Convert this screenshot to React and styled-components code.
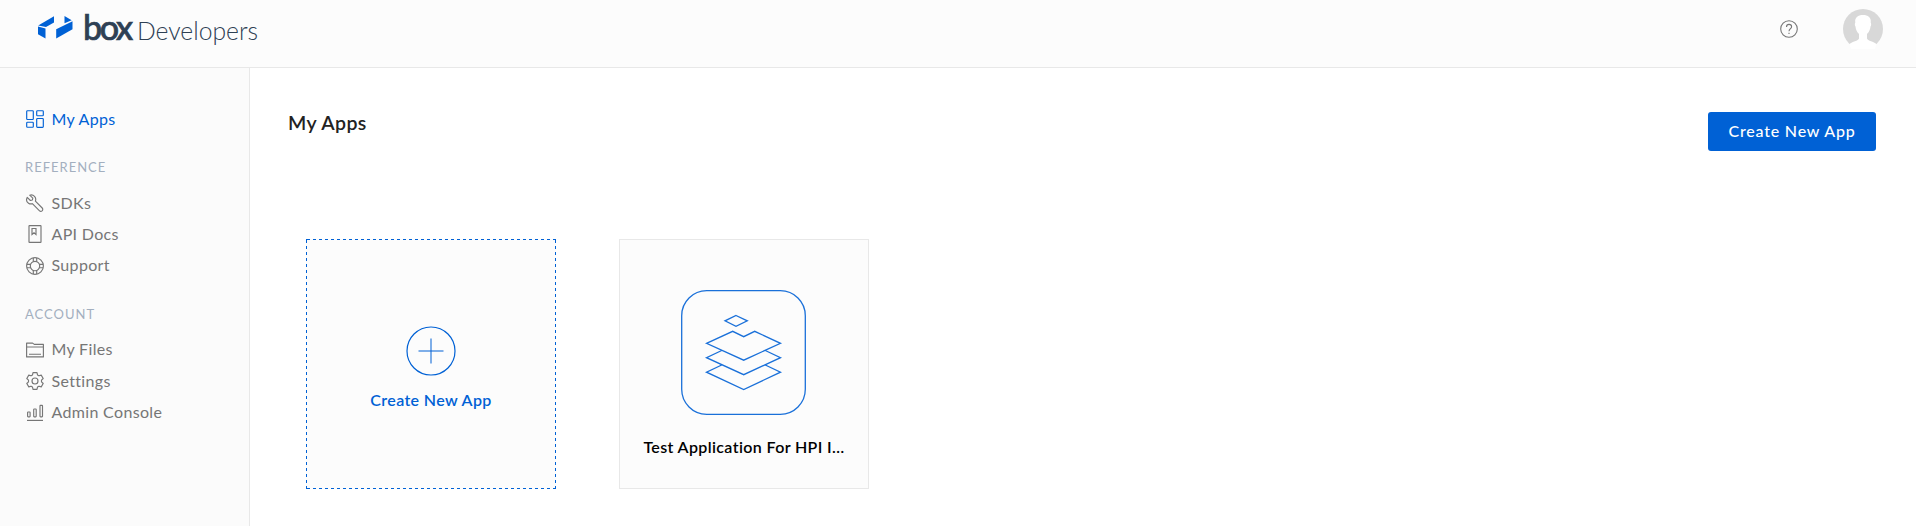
import React from "react";
import styled, { createGlobalStyle } from "styled-components";

const GlobalStyle = createGlobalStyle`
  * { box-sizing: border-box; }
  body {
    margin: 0;
    background: #fff;
    color: #222;
    font-family: Lato, "Liberation Sans", sans-serif;
    overflow: hidden;
  }
`;

const Page = styled.div`
  display: flex;
  flex-direction: column;
  height: 100vh;
`;

const Header = styled.header`
  display: flex;
  justify-content: space-between;
  height: 68px;
  flex: none;
  padding: 0 33px 0 37px;
  background: #fcfcfc;
  border-bottom: 1px solid #e8e8e8;
`;

const Brand = styled.a`
  display: flex;
  align-items: flex-start;
  color: #2e4054;
`;

const BrandMark = styled.svg`
  width: 36px;
  height: 24px;
  margin: 16px 10px 0 0;
`;

const BrandText = styled.div`
  display: flex;
  align-items: baseline;
`;

const BrandName = styled.span`
  width: 46px;
  font-size: 34px;
  line-height: 54px;
  font-weight: 500;
  letter-spacing: -2.4px;
  white-space: nowrap;
  -webkit-text-stroke: 0.7px #2e4054;
`;

const BrandProduct = styled.span`
  margin-left: 8px;
  font-size: 24.7px;
  font-weight: 300;
`;

const HeaderTools = styled.div`
  display: flex;
  align-items: flex-start;
  gap: 45px;
`;

const HelpIcon = styled.svg`
  width: 18px;
  height: 18px;
  margin-top: 20px;
`;

const Avatar = styled.svg`
  width: 40px;
  height: 40px;
  margin-top: 9px;
`;

const Body = styled.div`
  display: flex;
  flex: 1;
  min-height: 0;
`;

const Sidebar = styled.nav`
  width: 250px;
  flex: none;
  padding: 35.4px 0 0 25px;
  background: #fbfbfb;
  border-right: 1px solid #e8e8e8;
`;

const NavItem = styled.a`
  display: flex;
  align-items: center;
  gap: 6.5px;
  height: 31.3px;
  color: ${(p) => (p.$active ? "#0061d5" : "#767676")};
  font-size: 16px;
  letter-spacing: 0.33px;

  svg {
    width: 20px;
    height: 20px;
    flex: none;
    fill: none;
    stroke: currentColor;
    stroke-width: 1.15;
  }
`;

const NavLabel = styled.span`
  padding-bottom: 1.9px;
`;

const NavHeading = styled.h2`
  margin: 22.4px 0 10.4px;
  height: 20px;
  line-height: 20px;
  color: #a3afbf;
  font-size: 13px;
  font-weight: 400;
  letter-spacing: 1px;
`;

const Main = styled.main`
  flex: 1;
  padding: 44px 40px 0 38px;
`;

const TitleBar = styled.div`
  display: flex;
  justify-content: space-between;
  align-items: flex-start;
  height: 127px;
`;

const Title = styled.h1`
  margin: 0;
  line-height: 22px;
  font-size: 19.5px;
  font-weight: 600;
  letter-spacing: 0.42px;
`;

const PrimaryButton = styled.button`
  width: 168px;
  height: 39px;
  padding: 0 0 2px;
  border: 0;
  border-radius: 3px;
  background: #0061d5;
  color: #fff;
  font: 500 16px/37px Lato, sans-serif;
  letter-spacing: 0.8px;
`;

const CardGrid = styled.div`
  display: flex;
  gap: 63px;
  padding-left: 18px;
`;

const dash = (angle) =>
  `repeating-linear-gradient(${angle}, #0061d5 0 3px, transparent 3px 6px)`;

const corner = "linear-gradient(#0061d5, #0061d5)";

const Card = styled.article`
  display: flex;
  flex-direction: column;
  align-items: center;
  width: 250px;
  height: 250px;
  padding-top: 50px;
  background: #fcfcfc;
  border: 1px solid #e8e8e8;

  svg {
    flex: none;
    fill: none;
    stroke: #0061d5;
  }
`;

const NewAppCard = styled(Card)`
  padding-top: 87px;
  border: 0;
  background:
    ${corner} 0 0 / 1px 1px no-repeat,
    ${corner} 100% 0 / 1px 1px no-repeat,
    ${corner} 0 100% / 1px 1px no-repeat,
    ${corner} 100% 100% / 1px 1px no-repeat,
    ${dash("90deg")} 1px 0 / 100% 1px no-repeat,
    ${dash("90deg")} 1px 100% / 100% 1px no-repeat,
    ${dash("180deg")} 0 1px / 1px 100% no-repeat,
    ${dash("180deg")} 100% 1px / 1px 100% no-repeat,
    #fcfcfc;
`;

const AppIcon = styled.svg`
  width: 125px;
  height: 125px;
  margin-right: 2px;
  stroke-width: 1.3;
  stroke-opacity: 0.9;
`;

const CardTitle = styled.div`
  margin-top: ${(p) => p.$top}px;
  color: ${(p) => p.$color};
  font-size: 16px;
  font-weight: 600;
  line-height: 24px;
  letter-spacing: 0.37px;
  text-align: center;
  white-space: nowrap;
`;

const AppsIcon = () => (
  <svg viewBox="0 0 20 20">
    <rect x="1.7" y="1.7" width="6.6" height="8.8" rx=".8" />
    <rect x="11.7" y="1.7" width="6.6" height="5" rx=".8" />
    <rect x="1.7" y="13.2" width="6.6" height="5" rx=".8" />
    <rect x="11.7" y="9.5" width="6.6" height="8.8" rx=".8" />
  </svg>
);

const WrenchIcon = () => (
  <svg viewBox="0 0 20 20" strokeLinejoin="round">
    <path d="M4.7 2.2 7.8 5.2 7.4 7 5.4 7.5 2.2 4.4C1 6.8 1.7 9 3.5 10.2c1.2.8 2.6.9 3.9.5l6.9 6.9c.8.8 2 .9 2.8.3.8-.7.9-2 .1-2.9l-6.8-6.8c.6-1.7.3-3.6-.9-4.9C8.2 2 6.5 1.6 4.7 2.2Z" />
  </svg>
);

const DocsIcon = () => (
  <svg viewBox="0 0 20 20">
    <rect x="4" y="1.6" width="12" height="16.8" rx=".5" />
    <path d="M7 4.5h4v6L9 8.8 7 10.5Z" />
  </svg>
);

const SupportIcon = () => (
  <svg viewBox="0 0 20 20">
    <circle cx="10" cy="10" r="8.4" />
    <circle cx="10" cy="10" r="4.7" />
    <path d="M8.3 1.8v3.9M11.7 1.8v3.9M8.3 14.3v3.9M11.7 14.3v3.9M1.8 8.3h3.9M1.8 11.7h3.9M14.3 8.3h3.9M14.3 11.7h3.9" />
  </svg>
);

const FolderIcon = () => (
  <svg viewBox="0 0 20 20" strokeLinejoin="round">
    <path d="M1.6 16.9V3.1h6l1.7 1.3h9.1v12.5ZM1.6 7h16.8M4 14.2h12" />
  </svg>
);

const GearIcon = () => (
  <svg viewBox="0 0 20 20" strokeLinejoin="round">
    <circle cx="10" cy="10" r="3" />
    <path d="M8 1.6h4l.5 2.3 1.5.9 2.2-.7 2 3.4-1.7 1.6v1.8l1.7 1.6-2 3.4-2.2-.7-1.500.9-.5 2.300H8l-.5-2.300-1.500-.9-2.200.7-2-3.400 1.700-1.600V9.100L1.800 7.500l2-3.400 2.200.7 1.500-.9Z" />
  </svg>
);

const ChartIcon = () => (
  <svg viewBox="0 0 20 20">
    <path d="M2 18.4h16" />
    <rect x="2.6" y="10" width="2.5" height="4.8" rx=".5" />
    <rect x="8.7" y="7" width="2.5" height="7.8" rx=".5" />
    <rect x="15" y="3.4" width="2.5" height="11.4" rx=".5" />
  </svg>
);

const groups = [
  {
    heading: "REFERENCE",
    items: [
      ["SDKs", WrenchIcon],
      ["API Docs", DocsIcon],
      ["Support", SupportIcon],
    ],
  },
  {
    heading: "ACCOUNT",
    items: [
      ["My Files", FolderIcon],
      ["Settings", GearIcon],
      ["Admin Console", ChartIcon],
    ],
  },
];

export default function App() {
  return (
    <Page>
      <GlobalStyle />
      <Header>
        <Brand>
          <BrandMark viewBox="0 0 36 24" fill="#0061d5">
            <path d="M1.2 9.4 17 0.2v6.3L9 11 1.2 9.4Z" />
            <path d="M1 10.500 8.500 12.400V22.500L1 18.300Z" />
            <path d="M27.500 0 34.700 4.300 27.500 7.300Z" />
            <path d="M19.200 13.200 35.500 5.200V13.300L19.200 22.500Z" />
          </BrandMark>
          <BrandText>
            <BrandName>box</BrandName>
            <BrandProduct>Developers</BrandProduct>
          </BrandText>
        </Brand>
        <HeaderTools>
          <HelpIcon viewBox="0 0 18 18" fill="none" stroke="#767676" strokeWidth="1.1">
            <circle cx="9" cy="9" r="8.3" />
            <path d="M6.5 7.1C6.5 5.3 7.5 4.4 9 4.4s2.6.9 2.6 2.3C11.6 8.6 9 8.8 9 11.3M9 12.7v1.4" />
          </HelpIcon>
          <Avatar viewBox="0 0 40 40">
            <circle cx="20" cy="20" r="20" fill="#d8d8d8" />
            <path
              d="M6.5 35C9 32.5 15.5 32 16 29.5V25C13.5 22.5 12.8 20 12.5 17.5 11.5 16 11.8 14.5 12.3 13.5 11.5 8.5 15 6 20 6s8.5 2.5 7.7 7.5c.5 1 .8 2.5-.2 4-.3 2.5-1 5-3.5 7.5v4.5c.5 2.5 7 3 9.500 5.500L32 40H8Z"
              fill="#fff"
            />
          </Avatar>
        </HeaderTools>
      </Header>
      <Body>
        <Sidebar>
          <NavItem $active>
            <AppsIcon />
            <NavLabel>My Apps</NavLabel>
          </NavItem>
          {groups.map((group) => (
            <React.Fragment key={group.heading}>
              <NavHeading>{group.heading}</NavHeading>
              {group.items.map(([label, Icon]) => (
                <NavItem key={label}>
                  <Icon />
                  <NavLabel>{label}</NavLabel>
                </NavItem>
              ))}
            </React.Fragment>
          ))}
        </Sidebar>
        <Main>
          <TitleBar>
            <Title>My Apps</Title>
            <PrimaryButton>Create New App</PrimaryButton>
          </TitleBar>
          <CardGrid>
            <NewAppCard>
              <svg width="50" height="50" viewBox="0 0 50 50">
                <circle cx="25" cy="25" r="24" strokeWidth="1.2" />
                <path d="M25 12.5v25M12.5 25h25" />
              </svg>
              <CardTitle $top={12} $color="#0061d5">Create New App</CardTitle>
            </NewAppCard>
            <Card>
              <AppIcon viewBox="0 0 125 125">
                <rect x=".7" y=".7" width="123.6" height="123.6" rx="25" />
                <path d="M55 25.5 66.3 30.8 55 36.3 44 30.8Z" />
                <path d="M25.5 53.3 51.7 41.3 62.7 46.7 73.7 41.3 99.5 53.3 62.7 70.2Z" />
                <path d="M40.7 60.5 25.5 67.7 62.7 84.7 99.5 67.7 84.3 60.5" />
                <path d="M40.7 75 25.5 82.2 62.7 99.5 99.5 82.2 84.3 75" />
              </AppIcon>
              <CardTitle $top={20} $color="#000">Test Application For HPI I…</CardTitle>
            </Card>
          </CardGrid>
        </Main>
      </Body>
    </Page>
  );
}
